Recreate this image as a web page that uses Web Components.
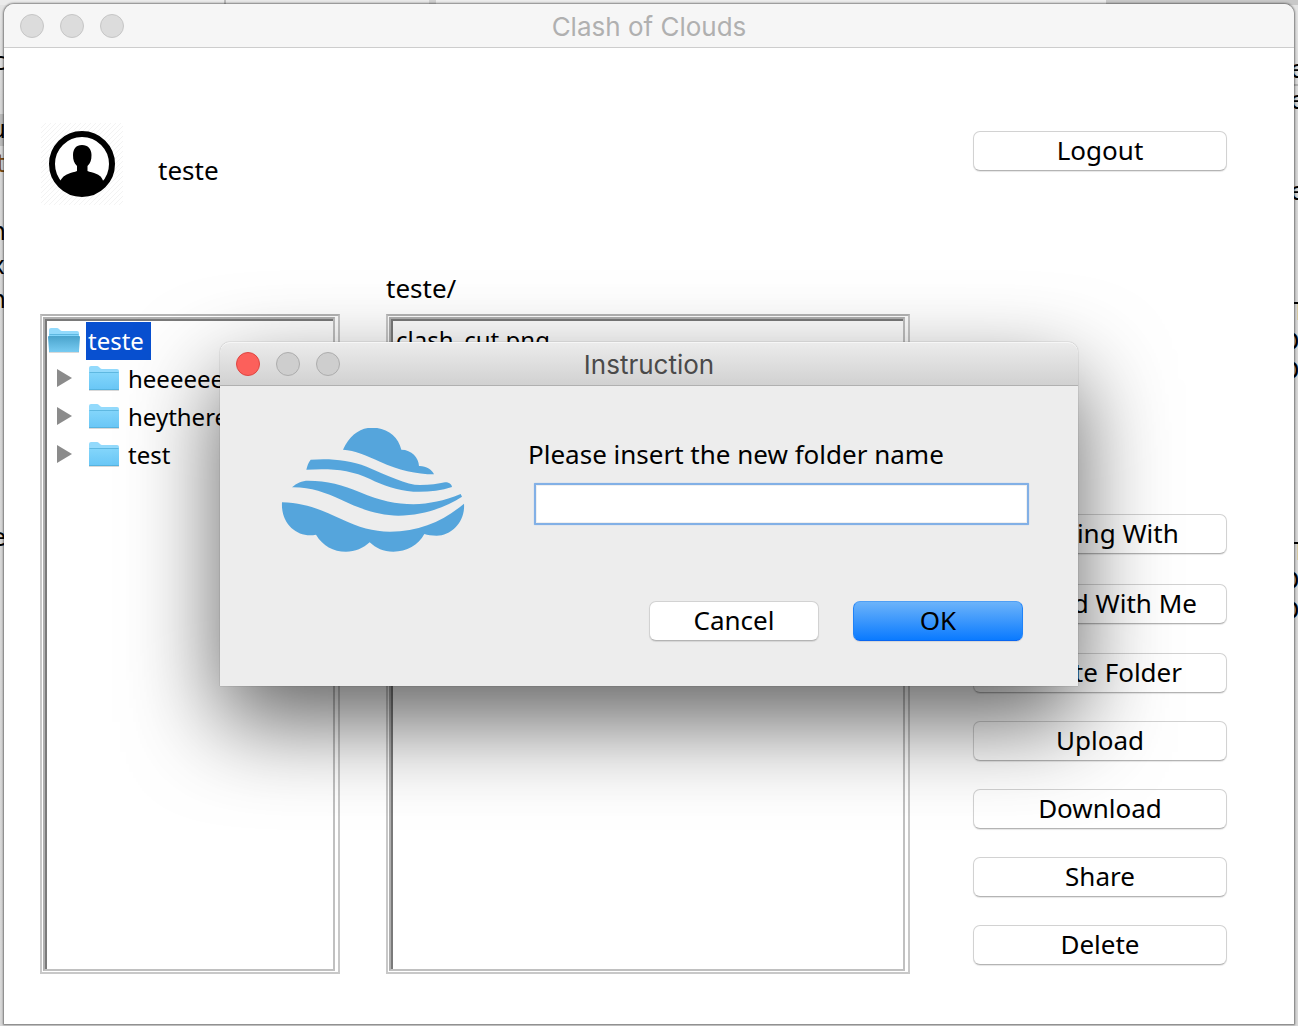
<!DOCTYPE html>
<html lang="en">
<head>
<meta charset="utf-8">
<title>Clash of Clouds</title>
<style>
  html, body { height: 100%; margin: 0; }
  body { font-family: "Noto Sans", "Open Sans", sans-serif; font-size: 26px; color: #000; }
</style>
</head>
<body>
<cloud-desktop></cloud-desktop>
<script>
const define = (name, html, setup) => {
  const template = document.createElement('template');
  template.innerHTML = html;
  customElements.define(name, class extends HTMLElement {
    constructor() {
      super();
      this.attachShadow({ mode: 'open' }).append(template.content.cloneNode(true));
    }
    connectedCallback() { if (setup) setup(this, this.shadowRoot); }
  });
};

define('title-bar', `
<style>
  :host { display: grid; grid-template-columns: 1fr auto 1fr; align-items: center; box-sizing: border-box; height: 44px;
    padding: 0 16px; background: #f6f6f6; border-bottom: 1px solid #cdcdcd; border-radius: 10px 10px 0 0;
    font: 26px/32px Inter, Roboto, sans-serif; color: #b0b0b0; --light: #dcdcdc; --rim: #c6c6c6; --close: #dcdcdc; --close-rim: #c6c6c6; }
  :host([active]) { background: linear-gradient(#ececec, #d1d1d1); border-bottom-color: #b0b0b0; box-shadow: inset 0 1px #f6f6f6;
    color: #4a4a4a; --light: #cecece; --rim: #adadad; --close: #fc605b; --close-rim: #de4642; }
  .lights { display: flex; gap: 16px; }
  .title { padding-top: 2px; }
  button { width: 24px; height: 24px; padding: 0; border: 1px solid var(--rim); border-radius: 50%; background: var(--light); }
  .close { background: var(--close); border-color: var(--close-rim); }
</style>
<div class="lights"><button class="close" aria-label="Close"></button><button aria-label="Minimize"></button><button aria-label="Zoom"></button></div>
<div class="title"><slot></slot></div>`);

define('push-button', `
<style>
  :host { display: block; }
  button { display: block; box-sizing: border-box; width: 100%; height: 40px; padding: 0 0 2px; border: 1px solid #d2d2d2; border-bottom-color: #b4b4b4;
    border-radius: 7px; background: #fff; box-shadow: 0 1px 1px rgba(0,0,0,.1); font: inherit; line-height: 36px; color: #000; }
  :host([primary]) button { background: linear-gradient(#6cb3fa, #0a7aff); border-color: #4f9ff5 #2083f8 #0a66f0; }
</style>
<button type="button"><slot></slot></button>`);

define('bezel-panel', `
<style>
  :host { display: flex; box-sizing: border-box; border: 2px solid #c8c8c8; border-top-color: #b4b4b4; padding: 1px 3px 1px 1px; }
  .well { flex: 1; min-width: 0; border: 2px solid #c0c0c0; border-top-color: #b0b0b0; border-left-color: #b0b0b0; }
  .inner { box-sizing: border-box; height: 100%; border: solid #7a7a7a; border-width: 2px 0 0 2px; overflow: hidden; }
</style>
<div class="well"><div class="inner"><slot></slot></div></div>`);

define('user-avatar', `
<style>:host { display: block; width: 82px; height: 82px; } svg { display: block; }</style>
<svg width="82" height="82" viewBox="0 0 82 82">
  <defs>
    <pattern id="hatch" width="5" height="5" patternUnits="userSpaceOnUse"><path d="M-1 6L6-1" stroke="#f3f3f3"/></pattern>
    <clipPath id="disc"><circle cx="41" cy="41" r="31"/></clipPath>
  </defs>
  <rect width="82" height="82" fill="url(#hatch)"/>
  <circle cx="41" cy="41" r="30" fill="#fff" stroke="#000" stroke-width="6"/>
  <path clip-path="url(#disc)" d="M41 22c6 0 9.500 4 9.500 10 0 5-1 8-4 11v5c2 1 6 1.500 9 3 5 2 6 5 7 8V76H19V59c1-3 3-6 8-8 3-1.500 7-2 9-3v-5c-3-3-4-6-4-11 0-6 3-10 9-10z"/>
</svg>`);

define('folder-icon', `
<style>:host { display: block; width: 32px; height: 26px; } .open { display: none; } :host([open]) .open { display: block; } svg { display: block; }</style>
<svg width="32" height="26" viewBox="0 0 32 26">
  <defs>
    <linearGradient id="face" x2="0" y2="1"><stop stop-color="#84d6fb"/><stop offset="1" stop-color="#68c6f6"/></linearGradient>
    <linearGradient id="front" x2="0" y2="1"><stop stop-color="#4aa3cc"/><stop offset="1" stop-color="#77cbf2"/></linearGradient>
  </defs>
  <path d="M1 25.500H31" stroke="#000" stroke-opacity=".15"/>
  <path d="M1 24V3q0-2 2-2h6q1 0 2 1l1 1q1 1 2 1h15q2 0 2 2v18q0 1-1 1H2q-1 0-1-1z" fill="#93dafc"/>
  <path d="M1 7h30v17q0 1-1 1H2q-1 0-1-1z" fill="url(#face)"/>
  <path d="M1.500 7.500h29M1 24.500h30" stroke="#4fabd6" stroke-opacity=".7" fill="none"/>
  <path class="open" d="M0 10q0-1 1-1h30q1 0 1 1l-1 14q0 1-1 1H2q-1 0-1-1z" fill="url(#front)"/>
</svg>`);

define('tree-row', `
<style>
  :host { display: flex; align-items: center; height: 38px; font-size: 24px; white-space: nowrap; }
  button { width: 40px; height: 38px; padding: 0 0 2px 9px; border: 0; background: none; }
  button svg { display: block; }
  :host([root]) button { display: none; }
  folder-icon { margin: 0 6px 2px 1px; }
  span { padding: 0 7px 0 2px; line-height: 38px; }
  :host([root]) span { background: #0850d0; color: #fff; }
</style>
<button aria-label="Expand"><svg width="16" height="18"><path d="M1 0L16 9L1 18Z" fill="#8b8b8b"/></svg></button>
<folder-icon></folder-icon><span><slot></slot></span>`,
(host, root) => root.querySelector('folder-icon').toggleAttribute('open', host.hasAttribute('root')));

define('cloud-logo', `
<style>:host { display: block; width: 184px; height: 124px; } svg { display: block; }</style>
<svg width="184" height="124" viewBox="33 39 552 372" fill="#55a5dc">
  <path d="M219 104C240 60 270 38 307 38C350 38 385 64 394 104C425 104 446 128 447 153C467 152 487 164 492 178C440 178 385 165 330 140C290 122 255 106 219 104Z"/>
  <path d="M122 134C175 130 235 133 290 155C350 180 410 210 450 210C480 210 505 207 525 202C537 202 545 208 546 216C510 228 465 232 430 230C380 226 340 212 300 192C240 163 180 160 109 164C112 152 115 142 122 134Z"/>
  <path d="M66 217C80 204 95 197 115 197C170 197 220 210 270 232C330 258 380 268 430 268C480 266 520 258 572 237L576 245C530 275 460 302 385 302C330 302 270 282 215 255C165 232 120 216 66 217Z"/>
  <path d="M36 262C110 264 160 287 215 313C265 337 310 350 360 350C450 350 520 318 582 266C586 320 545 362 500 362C485 362 473 360 463 357C445 390 410 410 370 410C340 410 318 400 299 382C280 400 255 410 228 410C190 410 158 392 138 359C85 370 32 330 36 262Z"/>
</svg>`);

define('folder-dialog', `
<style>
  :host { display: block; width: 858px; background: #ededed; border-radius: 10px 10px 0 0;
    box-shadow: 0 0 1px rgba(0,0,0,.6), 0 36px 90px rgba(0,0,0,.62); }
  .body { display: flex; align-items: flex-start; gap: 63px; padding: 42px 49px 45px 61px; }
  form { flex: 1; display: flex; flex-direction: column; padding-top: 8px; }
  label { line-height: 36px; white-space: nowrap; }
  input { box-sizing: border-box; height: 42px; margin: 11px 0 76px 6px; padding: 0 8px; border: 2px solid #82b0e6; border-radius: 1px; outline: 0;
    background: #fff; box-shadow: 0 0 1px #82b0e6, inset 0 0 0 1px #f0f0f0; font: inherit; }
  .actions { display: flex; justify-content: flex-end; gap: 34px; padding-right: 6px; }
  push-button { width: 170px; }
</style>
<title-bar active>Instruction</title-bar>
<div class="body">
  <cloud-logo></cloud-logo>
  <form>
    <label for="name">Please insert the new folder name</label>
    <input id="name" type="text">
    <div class="actions"><push-button>Cancel</push-button><push-button primary>OK</push-button></div>
  </form>
</div>`);

define('cloud-window', `
<style>
  :host { display: flex; flex-direction: column; position: relative; background: #fff; border-radius: 10px 10px 0 0; box-shadow: 0 0 2px 1px rgba(0,0,0,.45); }
  header { display: flex; justify-content: space-between; align-items: flex-start; box-sizing: border-box; height: 223px; padding: 75px 67px 0 37px; }
  .user { display: flex; align-items: center; gap: 35px; }
  .user span { padding-top: 12px; line-height: 36px; }
  header push-button { margin-top: 8px; }
  push-button { width: 254px; }
  main { flex: 1; min-height: 0; display: flex; align-items: stretch; padding: 0 67px 50px 36px; }
  .tree { width: 300px; margin: 43px 46px 0 0; }
  .files { flex: 1; min-width: 0; display: flex; flex-direction: column; }
  .path { height: 43px; line-height: 34px; }
  .files bezel-panel { flex: 1; }
  .actions { display: flex; flex-direction: column; justify-content: flex-end; gap: 29px; margin: 0 0 9px 63px; }
  .sharing { display: flex; flex-direction: column; gap: 30px; }
  .manage { display: flex; flex-direction: column; gap: 28px; }
  ul { list-style: none; margin: 0; padding: 1px 0 0; }
  .list { padding-left: 3px; font-size: 24px; line-height: 36px; }
  .overlay { position: absolute; inset: 0; display: grid; place-items: center; overflow: hidden; }
</style>
<title-bar>Clash of Clouds</title-bar>
<header>
  <div class="user"><user-avatar></user-avatar><span>teste</span></div>
  <push-button>Logout</push-button>
</header>
<main>
  <bezel-panel class="tree"><ul>
    <li><tree-row root>teste</tree-row></li>
    <li><tree-row>heeeeeee</tree-row></li>
    <li><tree-row>heythere</tree-row></li>
    <li><tree-row>test</tree-row></li>
  </ul></bezel-panel>
  <section class="files">
    <div class="path">teste/</div>
    <bezel-panel><ul class="list"><li>clash_cut.png</li></ul></bezel-panel>
  </section>
  <nav class="actions">
    <div class="sharing"><push-button>Sharing With</push-button><push-button>Shared With Me</push-button></div>
    <div class="manage"><push-button>Create Folder</push-button><push-button>Upload</push-button><push-button>Download</push-button><push-button>Share</push-button><push-button>Delete</push-button></div>
  </nav>
</main>
<div class="overlay"><folder-dialog></folder-dialog></div>`);

define('cloud-desktop', `
<style>
  :host { display: grid; position: relative; box-sizing: border-box; height: 100vh; min-height: 900px; padding: 4px 4px 2px; overflow: hidden;
    background: linear-gradient(90deg, #ebebeb 224px, #bbb 224px 226px, #e8e8e8 226px 429px, #d0d0d0 429px 436px, #ececec 436px 1106px, #c8c8c8 1106px) top / 100% 5px no-repeat,
      linear-gradient(#e4e4e4, #d6d6d6 100px, #d8d8d8); }
  svg { position: absolute; top: 0; width: 12px; height: 100%; font: 24px "DejaVu Sans", sans-serif; }
  .left { left: 0; text-anchor: end; } .right { right: 0; }
</style>
<svg class="left" aria-hidden="true"><rect y="114" width="12" height="32" fill="#b9b9b9"/>
  <text x="6" y="70">c</text><text x="6" y="138">u</text><text x="6" y="172" fill="#7a4a10">t</text><text x="6" y="240">n</text><text x="5" y="274">x</text><text x="6" y="308">n</text><text x="6" y="546">e</text></svg>
<svg class="right" aria-hidden="true"><path d="M0 85h12" stroke="#888"/>
  <text x="4" y="78">e</text><text x="4" y="109">e</text><text x="4" y="200">e</text><text x="6" y="320">T</text><text x="-5" y="350">D</text><text x="-5" y="379">D</text><text x="6" y="560">T</text><text x="-5" y="589">D</text><text x="-5" y="619">D</text></svg>
<cloud-window></cloud-window>`);
</script>
</body>
</html>
